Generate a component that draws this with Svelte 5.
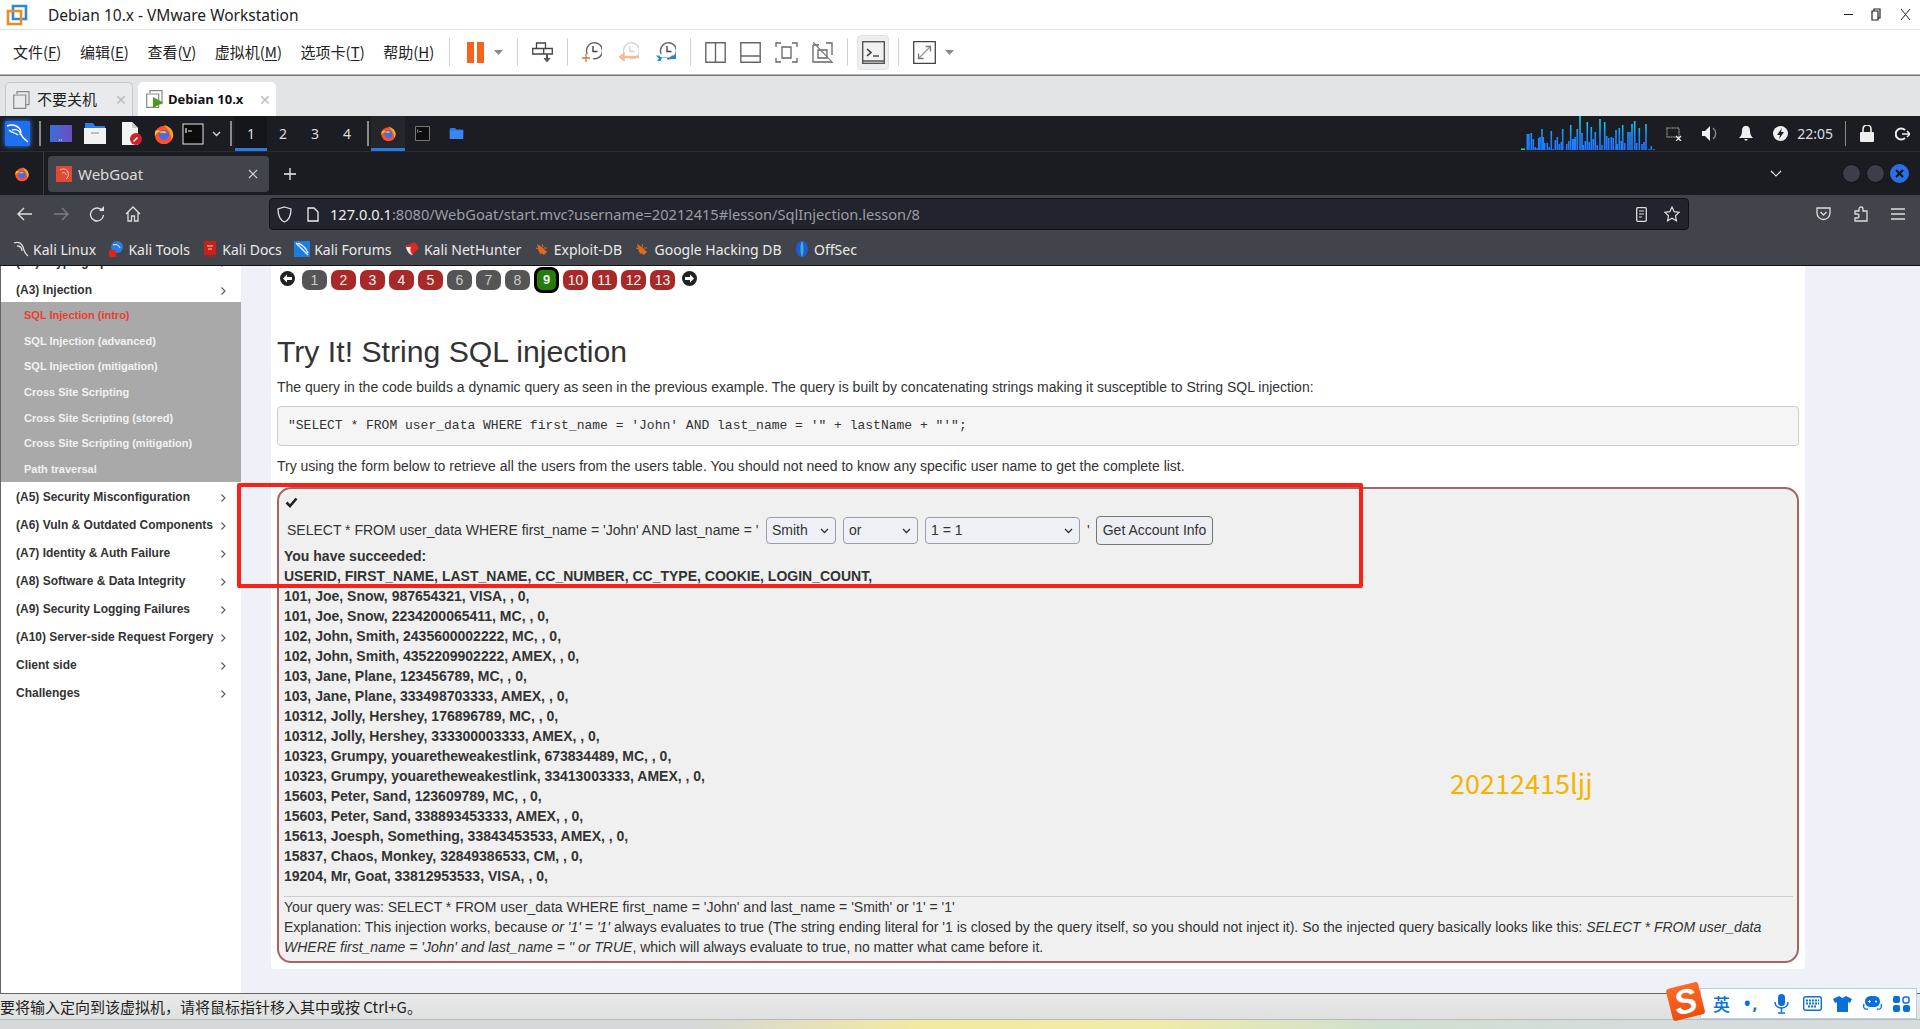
<script>
  const menus = [['文件(','F',')'],['编辑(','E',')'],['查看(','V',')'],['虚拟机(','M',')'],['选项卡(','T',')'],['帮助(','H',')']];
  const pages = [['1','g'],['2','r'],['3','r'],['4','r'],['5','r'],['6','g'],['7','g'],['8','g'],['9','c'],['10','r'],['11','r'],['12','r'],['13','r']];
  const subs = ['SQL Injection (advanced)','SQL Injection (mitigation)','Cross Site Scripting','Cross Site Scripting (stored)','Cross Site Scripting (mitigation)','Path traversal'];
  const cats = ['(A5) Security Misconfiguration','(A6) Vuln & Outdated Components','(A7) Identity & Auth Failure','(A8) Software & Data Integrity','(A9) Security Logging Failures','(A10) Server-side Request Forgery','Client side','Challenges'];
  const rows = ['101, Joe, Snow, 987654321, VISA, , 0,','101, Joe, Snow, 2234200065411, MC, , 0,','102, John, Smith, 2435600002222, MC, , 0,','102, John, Smith, 4352209902222, AMEX, , 0,','103, Jane, Plane, 123456789, MC, , 0,','103, Jane, Plane, 333498703333, AMEX, , 0,','10312, Jolly, Hershey, 176896789, MC, , 0,','10312, Jolly, Hershey, 333300003333, AMEX, , 0,','10323, Grumpy, youaretheweakestlink, 673834489, MC, , 0,','10323, Grumpy, youaretheweakestlink, 33413003333, AMEX, , 0,','15603, Peter, Sand, 123609789, MC, , 0,','15603, Peter, Sand, 338893453333, AMEX, , 0,','15613, Joesph, Something, 33843453533, AMEX, , 0,','15837, Chaos, Monkey, 32849386533, CM, , 0,','19204, Mr, Goat, 33812953533, VISA, , 0,'];
  const marks = [['Kali Linux','dragon'],['Kali Tools','tools'],['Kali Docs','docs'],['Kali Forums','forums'],['Kali NetHunter','hunter'],['Exploit-DB','bug'],['Google Hacking DB','bug'],['OffSec','off']];
  // Network graph samples: [column, height]
  const samples = [[13.3,16],[15,16],[17.3,17],[19.3,11],[21.3,3],[23.3,2],[24.7,12],[26,13],[28,21],[29.3,13],[30.7,7],[33.3,7],[35.3,3],[37.3,19],[39.3,1],[41.3,10],[43.3,13],[45.3,6],[47.3,8],[48.7,21],[52.7,6],[54.7,9],[56.7,25],[58.7,11],[60,11],[61.3,13],[63.3,21],[66,34],[68,17],[69.3,5],[71.3,9],[73.3,28],[75.3,8],[77.3,23],[79.3,11],[81.3,18],[83.3,5],[86,31],[88,5],[90.7,28],[92.7,14],[94.7,12],[97.3,13],[99.3,12],[102,20],[103.3,6],[105.3,22],[107.3,9],[108.7,25],[110.7,7],[114,18],[116,18],[118,26],[120.7,29],[122.7,7],[125.3,22],[128,6],[130,8],[132,26],[135.3,1],[137.3,4],[140,1]];
  const barPath = samples.map(([x,h])=>`M${x} 34V${34-h}`).join('');
</script>

{#snippet fox(s)}
  <svg width={s} height={s} viewBox="0 0 24 24" class="noshrink">
    <circle cx="12" cy="13" r="10" fill="#ff4f2f"/>
    <path d="M12 2c5 2 10 5 10 11 0 2-1 4-2 5 0-6-3-10-8-16z" fill="#ffa31a"/>
    <path d="M3 8c-1 2-1 4-1 6 2-3 4-5 7-5-2-1-4-1-6-1z" fill="#ffbf2e"/>
    <circle cx="12" cy="13" r="5.5" fill="#3f6fe0"/>
    <path d="M7 10c3-2 6-1 8 0-2 1-3 2-4 1-2 0-3 0-4-1z" fill="#ffb52b"/>
  </svg>
{/snippet}
{#snippet term(s, line)}
  <svg width={s} height={s} viewBox="0 0 22 22" class="noshrink">
    <rect x="1" y="1" width="20" height="20" fill="#0c0c0e" stroke={line} stroke-width="1"/>
    <path d="M4 5v5M6 8h4" stroke={line} stroke-width="1.2" fill="none"/>
  </svg>
{/snippet}
{#snippet folder(w, h)}
  <svg width={w} height={h} viewBox="0 0 22 18" class="noshrink">
    <path d="M1 3a2 2 0 0 1 2-2h6l2 2h8a2 2 0 0 1 2 2v2H1z" fill="#2a78e8"/>
    <path d="M1 5h20v11a1 1 0 0 1-1 1H2a1 1 0 0 1-1-1z" fill="#3b87f2"/>
  </svg>
{/snippet}
{#snippet chev()}
  <svg width="7" height="10" viewBox="0 0 7 10" class="chev"><path d="M1.5 1.5 5 5 1.5 8.5" fill="none" stroke="#555" stroke-width="1.1"/></svg>
{/snippet}
{#snippet caret()}
  <svg width="9" height="5" viewBox="0 0 9 5" class="noshrink"><path d="M0 0h9L4.5 5z" fill="#8a8a8a"/></svg>
{/snippet}
{#snippet clock(kind)}
  <svg width="20" height="20" viewBox="0 0 20 20" class="noshrink">
    <path d="M4.200 13A8 8 0 1 1 10 17.600" fill="none" stroke={kind===2?'#d4d4d4':'#666'} stroke-width="1.400" transform="translate(1 -1)"/>
    <path d="M11 4v5.500h4.500" fill="none" stroke={kind===2?'#d4d4d4':'#444'} stroke-width="1.400"/>
    {#if kind===1}<path d="M4 12v8M0 16h8" stroke="#e86a3a" stroke-width="1.300"/>{/if}
    {#if kind===2}<path d="M4 15h16M4.500 12.500 1 15l3.500 2.500z" stroke="#f9b896" fill="#f9b896" stroke-width="2.400"/>{/if}
    {#if kind===3}<path d="M0 13.500h3l1.500 1.500H14l2-1.500h4V17h-4l-2-1.500H6L4.500 19H1l2-2.500z" fill="#1888de"/>{/if}
  </svg>
{/snippet}
{#snippet selchev()}
  <svg width="9" height="6" viewBox="0 0 9 6" class="selchev"><path d="M1 1l3.500 3.500L8 1" fill="none" stroke="#333" stroke-width="1.300"/></svg>
{/snippet}

<div class="screen">
  <header class="title">
    <svg width="22" height="22" viewBox="0 0 22 22" class="vmlogo">
      <path d="M7 2h13v13H7z" fill="none" stroke="#2a8bd0" stroke-width="2.600"/>
      <path d="M2 7h13v13H2z" fill="none" stroke="#f08a1d" stroke-width="2.600"/>
    </svg>
    <span class="title-text">Debian 10.x - VMware Workstation</span>
    <div class="winctl">
      <span class="min"></span>
      <svg width="11" height="13" viewBox="0 0 11 13"><path d="M3 3V1h6v9H7M1 3h6v9H1z" fill="none" stroke="#222" stroke-width="1.2"/></svg>
      <svg width="11" height="13" viewBox="0 0 11 13"><path d="M1 1l9 11M10 1 1 12" stroke="#222" stroke-width="1"/></svg>
    </div>
  </header>

  <nav class="menubar">
    <div class="menus">
      {#each menus as m}<span>{m[0]}<u>{m[1]}</u>{m[2]}</span>{/each}
    </div>
    <i class="sep first"></i>
    <svg width="17" height="21" viewBox="0 0 17 21" class="noshrink"><path d="M0 0h7v21H0zM10 0h7v21h-7z" fill="#f4641e"/></svg>
    <span class="caretbox">{@render caret()}</span>
    <i class="sep"></i>
    <svg width="21" height="21" viewBox="0 0 21 21" class="noshrink"><path d="M4.500 1h9v5.500h-9zM.7 6.500h11v5.500H.7zM11.700 6.500h8.600v5.500h-8.600z" fill="none" stroke="#444" stroke-width="1.300"/><path d="M15 12v4" stroke="#555" stroke-width="2"/><path d="M11.500 16h7L15 20.500z" fill="#555"/></svg>
    <i class="sep"></i>
    <div class="clocks">
      {@render clock(1)}
      {@render clock(2)}
      {@render clock(3)}
    </div>
    <i class="sep"></i>
    <div class="panels">
      <svg width="21" height="21" viewBox="0 0 21 21"><path d="M.8.8h19.400v19.400H.8zM10.500 1v19" fill="none" stroke="#666" stroke-width="1.400"/></svg>
      <svg width="21" height="21" viewBox="0 0 21 21"><path d="M.8.8h19.400v19.400H.8zM1 14h19" fill="none" stroke="#666" stroke-width="1.400"/></svg>
      <svg width="23" height="21" viewBox="0 0 23 21"><path d="M1 5V1h5M17 1h5v4M22 16v4h-5M6 20H1v-4M7 5h9v11H7z" fill="none" stroke="#666" stroke-width="1.300"/></svg>
      <svg width="21" height="21" viewBox="0 0 21 21"><path d="M1 3h6M14 1h6v12M20 20H1V3M6 8h9v8H6z" fill="none" stroke="#666" stroke-width="1.300"/><path d="M1 0l20 21" stroke="#777" stroke-width="1.200"/></svg>
    </div>
    <i class="sep tight-r"></i>
    <div class="active">
      <svg width="23" height="23" viewBox="0 0 23 23"><rect x=".7" y=".7" width="21.600" height="21.600" fill="#f1f1f1" stroke="#555" stroke-width="1.400"/><path d="M5 8l4 3.500L5 15" fill="none" stroke="#333" stroke-width="1.500"/><path d="M11 15h6" stroke="#333" stroke-width="1.300"/><path d="M1 20h21" stroke="#555" stroke-width="1.500"/></svg>
    </div>
    <i class="sep tight-l"></i>
    <svg width="23" height="23" viewBox="0 0 23 23" class="noshrink"><path d="M.7.7h21.600v21.600H.7z" fill="none" stroke="#444" stroke-width="1.300"/><path d="M6 17 17 6" stroke="#999" stroke-width="1.200"/><path d="M12.500 5.500h5v5M5.500 12.500v5h5" fill="none" stroke="#777" stroke-width="1.300"/></svg>
    <span class="caret2">{@render caret()}</span>
  </nav>

  <div class="vmtabs">
    <div class="vtab off">
      <svg width="17" height="18" viewBox="0 0 17 18"><path d="M4 3V.7h12v13h-3M.7 4h12v13.300H.7z" fill="none" stroke="#888" stroke-width="1.200"/></svg>
      <span class="vt-name">不要关机</span>
      <span class="vt-x">✕</span>
    </div>
    <div class="vtab on">
      <svg width="17" height="18" viewBox="0 0 17 18"><path d="M4 3V.7h12v13h-3M.7 4h12v13.300H.7z" fill="none" stroke="#888" stroke-width="1.200"/><path d="M7 7l10 5.500L7 18z" fill="#4b9a1e"/></svg>
      <b class="vt-bold">Debian 10.x</b>
      <span class="vt-x">✕</span>
    </div>
  </div>

  <div class="panel">
    <div class="kali">
      <svg width="25" height="25" viewBox="0 0 25 25"><rect width="25" height="25" rx="1" fill="#1e70f0"/><path d="M2 5c5-2 9-1 12 2 2 2 2 5 1 7M7 9c4-1 7 0 9 4 1 3 3 5 7 8M4 9c2 3 6 2 9 5" fill="none" stroke="#fff" stroke-width="1.400"/></svg>
    </div>
    <i class="pbar"></i>
    <svg class="launch-a" width="22" height="17" viewBox="0 0 22 17"><defs><linearGradient id="dg" x1="0" x2="1"><stop offset="0" stop-color="#3b6fd8"/><stop offset="1" stop-color="#6a4fc0"/></linearGradient></defs><rect width="22" height="17" fill="url(#dg)"/><path d="M9 15h4" stroke="#fff" stroke-dasharray="1 1"/></svg>
    <svg class="launch-b" width="22" height="21" viewBox="0 0 22 21"><path d="M1 0h8l2 3h10v4H1z" fill="#2b7de9"/><rect x="0" y="5" width="22" height="16" fill="#f2f2f2"/><path d="M7 10h8" stroke="#aaa" stroke-width="1.400"/></svg>
    <svg class="launch-c" width="21" height="23" viewBox="0 0 21 23"><path d="M1 0h10l6 6v17H1z" fill="#f4f4f4"/><path d="M11 0v6h6" fill="#ccc"/><circle cx="15" cy="17" r="6" fill="#d3202a"/><path d="M12.500 19.500l4-4" stroke="#fff" stroke-width="1.600"/></svg>
    <span class="launch-d">{@render fox(22)}</span>
    <span class="launch-e">{@render term(22,'#e8e8e8')}</span>
    <svg class="launch-f" width="9" height="6" viewBox="0 0 9 6"><path d="M1 1l3.500 3.500L8 1" fill="none" stroke="#ddd" stroke-width="1.300"/></svg>
    <i class="pbar bar2"></i>
    <div class="works">
      <span class="cur">1</span><span>2</span><span>3</span><span>4</span>
    </div>
    <i class="pbar bar3"></i>
    <span class="task cur">{@render fox(17)}</span>
    <span class="task">{@render term(15,'#aaa')}</span>
    <span class="task">{@render folder(15,13)}</span>
    <div class="grow"></div>
    <svg class="graph" width="150" height="34" viewBox="0 0 150 34">
      <defs><linearGradient id="gg" gradientUnits="userSpaceOnUse" x1="0" y1="34" x2="0" y2="0"><stop offset="0" stop-color="#1f78ff"/><stop offset=".4" stop-color="#1f86ff"/><stop offset=".75" stop-color="#0fc4ea"/><stop offset="1" stop-color="#00e8e0"/></linearGradient></defs>
      <rect x="7" y="32.500" width="4" height="1.500" fill="#19d9b0"/>
      <path d={barPath} stroke="url(#gg)" stroke-width="1.600" fill="none"/>
    </svg>
    <svg class="tray net" width="16" height="14" viewBox="0 0 16 14"><path d="M1 1h12v9H1z" fill="none" stroke="#777" stroke-width="1.500" stroke-dasharray="2 .5"/><path d="M10 9l5 5M15 9l-5 5" stroke="#eee" stroke-width="1.300"/></svg>
    <svg class="tray" width="17" height="15" viewBox="0 0 17 15"><path d="M0 5h3l5-5v15l-5-5H0z" fill="#f0f0f0"/><path d="M11 2a7 7 0 0 1 0 11" fill="none" stroke="#888" stroke-width="1.500"/></svg>
    <svg class="tray" width="14" height="15" viewBox="0 0 14 15"><path d="M7 0c3 0 4 2 4 5 0 3 1 5 3 7H0c2-2 3-4 3-7 0-3 1-5 4-5zM5 13h4l-2 2z" fill="#f0f0f0"/></svg>
    <svg class="tray" width="15" height="15" viewBox="0 0 15 15"><circle cx="7.500" cy="7.500" r="7.500" fill="#f0f0f0"/><path d="M9 2 4 9h3l-1 4 5-7H8z" fill="#1c1e23"/></svg>
    <span class="clock-text">22:05</span>
    <i class="pbar bar4"></i>
    <svg class="lock" width="14" height="17" viewBox="0 0 14 17"><path d="M3 7V4a4 4 0 0 1 8 0v3" fill="none" stroke="#eee" stroke-width="1.600"/><rect y="7" width="14" height="10" rx="1" fill="#eee"/></svg>
    <svg class="power" width="15" height="14" viewBox="0 0 15 14"><path d="M10 3a5.500 5.500 0 1 0 0 8" fill="none" stroke="#eee" stroke-width="2"/><path d="M7 7h8M12 4l3 3-3 3" fill="none" stroke="#eee" stroke-width="1.500"/></svg>
  </div>

  <div class="fftabs">
    <div class="ffbtn">{@render fox(16)}</div>
    <div class="fftab">
      <svg width="16" height="16" viewBox="0 0 16 16" class="noshrink"><rect width="16" height="16" rx="1" fill="#e04a35"/><path d="M4 4c3-2 7-1 8 2s0 6-2 7M6 7c2-1 4 0 4 2" fill="none" stroke="#f7c9bd" stroke-width="1"/></svg>
      <span class="fft-name">WebGoat</span>
      <svg width="10" height="10" viewBox="0 0 10 10" class="fft-x"><path d="M1 1l8 8M9 1 1 9" stroke="#d8d8d8" stroke-width="1.100"/></svg>
    </div>
    <svg width="12" height="12" viewBox="0 0 12 12" class="plus"><path d="M6 0v12M0 6h12" stroke="#eee" stroke-width="1.300"/></svg>
    <div class="grow"></div>
    <svg width="12" height="7" viewBox="0 0 12 7" class="ffchev"><path d="M1 1l5 5 5-5" fill="none" stroke="#e8e8e8" stroke-width="1.200"/></svg>
    <i class="dot"></i><i class="dot"></i>
    <span class="dot close"><svg width="9" height="9" viewBox="0 0 9 9"><path d="M1 1l7 7M8 1 1 8" stroke="#111" stroke-width="2"/></svg></span>
  </div>

  <div class="navbar">
    <svg class="nb back" width="16" height="14" viewBox="0 0 16 14"><path d="M15 7H1M7 1 1 7l6 6" fill="none" stroke="#ddd" stroke-width="1.400"/></svg>
    <svg class="nb fwd" width="16" height="14" viewBox="0 0 16 14"><path d="M1 7h14M9 1l6 6-6 6" fill="none" stroke="#7d7f86" stroke-width="1.400"/></svg>
    <svg class="nb rel" width="16" height="16" viewBox="0 0 16 16"><path d="M13.500 5A6.500 6.500 0 1 0 14.500 9" fill="none" stroke="#ddd" stroke-width="1.400"/><path d="M10 5h5V0z" fill="#ddd"/></svg>
    <svg class="nb home" width="16" height="16" viewBox="0 0 16 16"><path d="M1 8l7-7 7 7M3 6v9h3.500v-5h3v5H13V6" fill="none" stroke="#ddd" stroke-width="1.300"/></svg>
    <div class="urlbar">
      <svg class="shield" width="15" height="17" viewBox="0 0 15 17"><path d="M7.500 1 14 3c0 7-2 11-6.500 13C3 14 1 10 1 3z" fill="none" stroke="#ddd" stroke-width="1.300"/></svg>
      <svg class="file" width="12" height="15" viewBox="0 0 12 15"><path d="M1 1h6l4 4v9H1z" fill="none" stroke="#eee" stroke-width="1.300"/></svg>
      <span class="url"><b>127.0.0.1</b>:8080/WebGoat/start.mvc?username=20212415#lesson/SqlInjection.lesson/8</span>
      <div class="grow"></div>
      <svg class="reader" width="11" height="15" viewBox="0 0 11 15"><rect x=".7" y=".7" width="9.600" height="13.600" rx="1" fill="none" stroke="#ddd" stroke-width="1.300"/><path d="M3 4h5M3 7h5M3 10h3" stroke="#ddd"/></svg>
      <svg class="star" width="16" height="16" viewBox="0 0 16 16"><path d="M8 1l2.200 4.700 5 .6-3.700 3.500 1 5L8 12.300 3.500 14.800l1-5L.8 6.300l5-.6z" fill="none" stroke="#ddd" stroke-width="1.200"/></svg>
    </div>
    <svg class="pocket" width="15" height="14" viewBox="0 0 15 14"><path d="M1 1h13v5a6.500 6.500 0 0 1-13 0z" fill="none" stroke="#ddd" stroke-width="1.300"/><path d="M4.500 5l3 3 3-3" fill="none" stroke="#ddd" stroke-width="1.300"/></svg>
    <svg class="puzzle" width="15" height="16" viewBox="0 0 15 16"><path d="M1 5h4V3a2 2 0 0 1 4 0v2h4v10H1v-3h2a2 2 0 0 0 0-4H1z" fill="none" stroke="#ddd" stroke-width="1.300"/></svg>
    <svg class="burger" width="14" height="12" viewBox="0 0 14 12"><path d="M0 1h14M0 6h14M0 11h14" stroke="#ddd" stroke-width="1.300"/></svg>
  </div>

  <div class="marks">
    {#each marks as [label, kind]}
      <span class="mark">
        <svg width="16" height="16" viewBox="0 0 16 16" class="noshrink">
          {#if kind==='dragon'}<path d="M1 2c5-2 8 1 9 4s1 6 5 9M4 5c3 0 5 2 5 5" fill="none" stroke="#ddd" stroke-width="1.300"/>
          {:else if kind==='tools'}<circle cx="9" cy="6" r="6" fill="#2c7be5"/><rect x="1" y="9" width="7" height="7" rx="1" fill="#d8261d"/><path d="M5 4c3-1 6 0 7 3" stroke="#fff" fill="none"/>
          {:else if kind==='docs'}<rect x="2" width="12" height="16" fill="#c9201a"/><path d="M5 5h6M6 8h4" stroke="#f4d0c8"/><path d="M2 15h12" stroke="#344"/>
          {:else if kind==='forums'}<rect width="16" height="16" fill="#1e7be0"/><path d="M2 2l12 12M4 2c5 2 8 5 10 10" stroke="#fff" stroke-width="1.300" fill="none"/>
          {:else if kind==='hunter'}<path d="M1 5l10-4 4 6-8 8z" fill="#d92a24"/><path d="M2 6c1 5 4 8 7 8-3-3-3-6-2-8z" fill="#eee"/>
          {:else if kind==='bug'}<path d="M3 3l5 3 5 5-3 3-5-3z" fill="#e06a1c"/><path d="M2 7l3 1M6 13l1-3M8 3l1 3M13 7l-3 0" stroke="#e06a1c"/>
          {:else}<ellipse cx="8" cy="8" rx="6" ry="8" fill="#2458d8"/><path d="M8 0c-2 3-2 13 0 16 2-3 2-13 0-16z" fill="#35b5c8"/>{/if}
        </svg>
        <span>{label}</span>
      </span>
    {/each}
  </div>

  <div class="page">
    <aside class="side">
      <div class="cat clipped"><span>(A2) Cryptographic Failures</span>{@render chev()}</div>
      <div class="cat open"><span>(A3) Injection</span>{@render chev()}</div>
      <div class="subs">
        <div class="sub red">SQL Injection (intro)</div>
        {#each subs as s}<div class="sub">{s}</div>{/each}
      </div>
      <div class="cats">
        {#each cats as c}<div class="cat"><span>{c}</span>{@render chev()}</div>{/each}
      </div>
    </aside>
    <main class="main">
      <section class="card">
        <div class="pager">
          <svg width="15" height="15" viewBox="0 0 15 15" class="arrow"><circle cx="7.500" cy="7.500" r="7.500" fill="#222"/><path d="M3 7.500l4-4v2.500h5v3H7v2.500z" fill="#fff"/></svg>
          <div class="badges">
            {#each pages as [n, k]}<span class="badge {k}">{n}</span>{/each}
          </div>
          <svg width="15" height="15" viewBox="0 0 15 15" class="arrow after"><circle cx="7.500" cy="7.500" r="7.500" fill="#222"/><path d="M12 7.500l-4-4v2.500H3v3h5v2.500z" fill="#fff"/></svg>
        </div>
        <h2>Try It! String SQL injection</h2>
        <p class="lead">The query in the code builds a dynamic query as seen in the previous example. The query is built by concatenating strings making it susceptible to String SQL injection:</p>
        <pre class="code">"SELECT * FROM user_data WHERE first_name = 'John' AND last_name = '" + lastName + "'";</pre>
        <p class="lead second">Try using the form below to retrieve all the users from the users table. You should not need to know any specific user name to get the complete list.</p>
        <div class="attack">
          <svg width="13" height="11" viewBox="0 0 13 11" class="tick"><path d="M1.500 5.500 5 9l6.500-7.500" fill="none" stroke="#222" stroke-width="2.600"/></svg>
          <form class="query">
            <span class="qtext">SELECT * FROM user_data WHERE first_name = 'John' AND last_name = '</span>
            <span class="sel s1"><select><option>Smith</option></select>{@render selchev()}</span>
            <span class="sel s2"><select><option>or</option></select>{@render selchev()}</span>
            <span class="sel s3"><select><option>1 = 1</option></select>{@render selchev()}</span>
            <span class="quote">'</span>
            <button type="button" class="go">Get Account Info</button>
          </form>
          <div class="out">
            <div>You have succeeded:</div>
            <div>USERID, FIRST_NAME, LAST_NAME, CC_NUMBER, CC_TYPE, COOKIE, LOGIN_COUNT,</div>
            {#each rows as r}<div>{r}</div>{/each}
          </div>
          <hr />
          <div class="expl">
            <div>Your query was: SELECT * FROM user_data WHERE first_name = 'John' and last_name = 'Smith' or '1' = '1'</div>
            <div>Explanation: This injection works, because <em>or '1' = '1'</em> always evaluates to true (The string ending literal for '1 is closed by the query itself, so you should not inject it). So the injected query basically looks like this: <em>SELECT * FROM user_data WHERE first_name = 'John' and last_name = '' or TRUE</em>, which will always evaluate to true, no matter what came before it.</div>
          </div>
        </div>
      </section>
    </main>
  </div>

  <footer class="status">要将输入定向到该虚拟机，请将鼠标指针移入其中或按 Ctrl+G。</footer>
  <div class="desk"></div>

  <div class="redbox"></div>
  <div class="wm">20212415ljj</div>
  <div class="ime">
    <span class="ime-zh">英</span>
    <span class="ime-p">•,</span>
    <svg class="mic" width="15" height="20" viewBox="0 0 15 20"><rect x="4" y="0" width="7" height="12" rx="3.500" fill="#0a6fd8"/><path d="M1 8c0 4 3 6 6.500 6S14 12 14 8M7.500 14v4M4 19h7" fill="none" stroke="#0a6fd8" stroke-width="1.500"/></svg>
    <svg width="19" height="15" viewBox="0 0 19 15"><rect x=".7" y=".7" width="17.600" height="13.600" rx="2" fill="none" stroke="#0a6fd8" stroke-width="1.400"/><path d="M3 4.500h13M3 7.500h13M5 10.500h9" stroke="#0a6fd8" stroke-width="1.800" stroke-dasharray="2 1"/></svg>
    <svg width="19" height="16" viewBox="0 0 19 16"><path d="M6 0l3.500 2L13 0l6 3-2 4-2-1v10H4V6L2 7 0 3z" fill="#0a6fd8"/></svg>
    <svg width="19" height="16" viewBox="0 0 19 16"><rect x="2" y="0" width="15" height="11" rx="5.500" fill="#0a6fd8"/><path d="M5 5.500h3M6.500 4v3" stroke="#fff"/><circle cx="13" cy="5.500" r="1" fill="#fff"/><path d="M1 8c-1 3 0 6 4 5M18 8c1 3 0 6-4 5" fill="none" stroke="#0a6fd8" stroke-width="1.300"/></svg>
    <svg width="17" height="16" viewBox="0 0 17 16"><rect width="7" height="7" rx="2" fill="#0a6fd8"/><rect x="10" y="1" width="6" height="6" rx="2" fill="none" stroke="#0a6fd8" stroke-width="1.500"/><rect y="9" width="7" height="7" rx="2" fill="#0a6fd8"/><rect x="10" y="9" width="7" height="7" rx="2" fill="#0a6fd8"/></svg>
  </div>
  <div class="sogou"><span>S</span></div>
</div>

<style>
  :global(body) { margin: 0; background: #fff; }
  :global(html, body) { overflow: hidden; }
  .screen { position: relative; width: 1920px; height: 1029px; overflow: hidden; display: flex; flex-direction: column; font-family: "Noto Sans", "Noto Sans CJK SC", sans-serif; color: #222; background: #fff; }
  .noshrink { flex: none; display: block; }
  .grow { flex: 1; }
  i { display: block; font-style: normal; }

  .title { height: 29px; flex: none; display: flex; align-items: center; border-bottom: 1px solid #e4e4e4; padding-left: 6px; }
  .vmlogo { flex: none; }
  .title-text { margin-left: 20px; font-size: 15.500px; color: #222; }
  .winctl { margin-left: auto; display: flex; align-items: center; gap: 18px; padding-right: 9px; }
  .min { width: 9px; height: 1.500px; background: #222; }

  .menubar { height: 45px; flex: none; box-sizing: border-box; display: flex; align-items: center; padding-left: 13px; border-bottom: 1px solid #b4b4b4; }
  .menus { display: flex; gap: 18.500px; font-size: 15px; font-family: "Noto Sans CJK SC", sans-serif; width: 422px; flex: none; color: #222; padding-bottom: 2px; white-space: nowrap; }
  .menus u { text-underline-offset: 2px; }
  .sep { width: 1px; height: 28px; background: #d2d2d2; margin: 0 14px; flex: none; }
  .sep.first { margin-left: 14px; margin-right: 17px; }
  .caretbox { margin-left: 10px; flex: none; }
  .clocks { display: flex; gap: 17px; flex: none; }
  .panels { display: flex; gap: 14px; flex: none; }
  .sep.tight-r { margin-right: 9px; }
  .sep.tight-l { margin-left: 9px; }
  .active { width: 32px; height: 35px; background: #eceeef; border: 1px solid #e0e2e4; border-radius: 4px; box-sizing: border-box; display: flex; align-items: center; justify-content: center; flex: none; }
  .caret2 { margin-left: 9px; flex: none; }

  .vmtabs { height: 41px; flex: none; box-sizing: border-box; background: #e3e4e6; border-top: 1px solid #777; display: flex; align-items: flex-end; padding-left: 5px; gap: 5px; }
  .vtab { height: 34px; box-sizing: border-box; border-radius: 5px 5px 0 0; display: flex; align-items: center; padding-left: 7px; flex: none; }
  .vtab.off { width: 128px; background: #e9eaec; border: 1px solid #c8c8c8; border-bottom: none; }
  .vtab.on { width: 138px; background: #fff; padding-left: 8px; }
  .vt-name { margin-left: 7px; font-size: 15px; font-family: "Noto Sans CJK SC", sans-serif; padding-bottom: 2px; }
  .vt-bold { margin-left: 5px; font-size: 13px; font-family: "Open Sans", sans-serif; font-weight: 700; color: #111; }
  .vt-x { margin-left: auto; margin-right: 5px; font-size: 14px; color: #bbb; }

  .panel { height: 35px; flex: none; background: #1b1d22; display: flex; align-items: center; position: relative; padding-left: 5px; color: #ddd; }
  .kali { width: 25px; height: 25px; box-shadow: 0 0 5px #2a80ff; flex: none; }
  .kali svg { display: block; }
  .pbar { width: 2px; height: 25px; background: #8b8b8b; margin-left: 9px; flex: none; }
  .launch-a { margin-left: 9px; flex: none; }
  .launch-b { margin-left: 12px; flex: none; }
  .launch-c { margin-left: 15px; flex: none; }
  .launch-d { margin-left: 11px; flex: none; }
  .launch-e { margin-left: 7px; flex: none; }
  .launch-f { margin-left: 8px; flex: none; }
  .bar2 { margin-left: 9px; }
  .works { display: flex; margin-left: 3px; height: 35px; flex: none; font-size: 14px; }
  .works span { width: 32px; display: flex; align-items: center; justify-content: center; box-sizing: border-box; color: #ddd; }
  .works .cur { background: #14161b; border-bottom: 3px solid #2a7ae2; padding-top: 2px; }
  .bar3 { margin-left: 4px; }
  .task { width: 34px; height: 35px; box-sizing: border-box; display: flex; align-items: center; justify-content: center; flex: none; }
  .task.cur { background: #24262c; border-bottom: 3px solid #2a7ae2; margin-left: 2px; padding-top: 2px; }
  .graph { flex: none; margin-right: 2px; display: block; align-self: flex-end; margin-bottom: 1px; }
  .tray { margin-right: 20px; flex: none; }
  .net { margin-right: 20px; }
  .clock-text { font-size: 14px; color: #d8dde8; margin-left: -11px; margin-right: 12px; flex: none; }
  .bar4 { margin-left: 0; width: 1px; }
  .lock { margin-left: 14px; flex: none; }
  .power { margin-left: 21px; margin-right: 10px; flex: none; }

  .fftabs { height: 44px; flex: none; background: #1b1c21; border-top: 1px solid #2a2c31; box-sizing: border-box; display: flex; align-items: center; }
  .ffbtn { width: 43px; height: 43px; border-right: 1px solid #3a3c42; display: flex; align-items: center; justify-content: center; flex: none; box-sizing: content-box; }
  .fftab { width: 221px; height: 36px; margin-left: 4px; background: #42444b; border-radius: 4px; display: flex; align-items: center; padding-left: 8px; box-sizing: border-box; flex: none; }
  .fft-name { margin-left: 6px; font-size: 15px; color: #dcdcdc; }
  .fft-x { margin-left: auto; margin-right: 11px; }
  .plus { margin-left: 15px; flex: none; }
  .ffchev { margin-right: 60px; flex: none; }
  .dot { width: 17px; height: 17px; border-radius: 50%; background: #3c3f4a; border: 1px solid #111; margin-right: 5px; flex: none; display: flex; align-items: center; justify-content: center; }
  .dot.close { background: #2a6fe8; border-color: #2a6fe8; margin-right: 11px; }

  .navbar { height: 38px; flex: none; background: #42444b; display: flex; align-items: center; box-sizing: border-box; }
  .back { margin-left: 17px; }
  .fwd { margin-left: 20px; }
  .rel { margin-left: 20px; }
  .home { margin-left: 20px; }
  .nb { flex: none; }
  .urlbar { margin-left: 128px; width: 1420px; height: 32px; box-sizing: border-box; background: #22242d; border: 1px solid #111; border-radius: 4px; display: flex; align-items: center; padding-left: 7px; flex: none; }
  .shield { flex: none; }
  .file { margin-left: 15px; flex: none; }
  .url { margin-left: 11px; font-size: 14.630px; color: #9b9da3; white-space: nowrap; }
  .url b { font-weight: 400; color: #eee; }
  .reader { flex: none; margin-right: 17px; }
  .star { flex: none; margin-right: 8px; }
  .pocket { margin-left: 127px; flex: none; }
  .puzzle { margin-left: 23px; flex: none; }
  .burger { margin-left: 22px; flex: none; }

  .marks { height: 33px; flex: none; background: #42444b; display: flex; align-items: center; padding-left: 13px; gap: 12.400px; font-size: 14px; color: #eaeaea; border-bottom: 1px solid #111; box-sizing: border-box; }
  .mark { display: flex; align-items: center; gap: 4px; white-space: nowrap; }

  .page { flex: 1; min-height: 0; display: flex; overflow: hidden; background: #eff1f8; border-left: 1px solid #666; }
  .side { width: 240px; flex: none; background: #fff; font-family: "Liberation Sans", sans-serif; font-size: 12px; font-weight: 700; color: #333; }
  .cat { height: 28px; display: flex; align-items: center; padding-left: 15px; position: relative; }
  .cat.clipped { margin-top: -18px; margin-bottom: 1px; }
  .cat.open { height: 25px; }
  .chev { position: absolute; left: 219px; top: 50%; margin-top: -4px; }
  .subs { background: #a9a9a9; height: 180px; padding-top: 0; }
  .sub { height: 25.700px; display: flex; align-items: center; padding-left: 23px; font-size: 11px; color: #f2f2f2; }
  .sub.red { color: #e8402f; }
  .cats { padding-top: 1px; }

  .main { flex: 1; min-width: 0; padding-left: 30px; font-family: "Liberation Sans", sans-serif; }
  .card { width: 1534px; background: #fff; padding: 4px 6px 6px; box-sizing: border-box; border-radius: 0 0 4px 4px; color: #333; font-size: 14px; line-height: 20px; }
  .pager { display: flex; align-items: flex-start; padding-left: 3px; height: 20px; }
  .arrow { flex: none; margin-top: 1px; }
  .after { margin-left: 7px; }
  .badges { display: flex; gap: 4px; margin-left: 7px; }
  .badge { width: 25px; height: 20px; border-radius: 7px; color: #eee; display: flex; align-items: center; justify-content: center; font-size: 14px; box-sizing: border-box; }
  .badge.g { background: #555; color: #ccc; }
  .badge.r { background: #a82a28; }
  .badge.c { background: #267c0b; border: 3px solid #000; font-weight: 700; color: #eee; height: 26px; margin-top: -3px; border-radius: 8px; font-size: 13px; }
  h2 { margin: 42px 0 0; font-size: 30.200px; line-height: 40px; font-weight: 400; color: #333; }
  .lead { margin: 5px 0 0; }
  .lead.second { margin-top: 10px; }
  .code { margin: 9px 0 0; height: 40px; box-sizing: border-box; padding: 9px 10px; background: #f5f5f5; border: 1px solid #ccc; border-radius: 4px; font-family: "Liberation Mono", monospace; font-size: 13px; line-height: 20px; color: #333; }
  .attack { margin-top: 11px; height: 476px; box-sizing: border-box; background: #f0f0f0; border: 2px solid #a86464; border-radius: 14px; padding: 4px 4px 4px 5px; }
  .tick { display: block; margin: 4px 0 0 1px; }
  .query { display: flex; align-items: center; height: 28px; margin-top: 8px; padding-left: 3px; }
  .qtext { width: 479px; flex: none; white-space: nowrap; }
  .sel { position: relative; height: 27px; flex: none; display: block; }
  .sel select { appearance: none; width: 100%; height: 27px; box-sizing: border-box; border: 1px solid #9a9ea8; border-radius: 4px; background: #eef0f6; font-family: "Liberation Sans", sans-serif; font-size: 14px; color: #333; padding: 0 0 0 5px; display: block; }
  .selchev { position: absolute; right: 7px; top: 11px; pointer-events: none; }
  .s1 { width: 70px; }
  .s2 { width: 75px; margin-left: 7px; }
  .s3 { width: 155px; margin-left: 7px; }
  .quote { margin-left: 7px; width: 9px; flex: none; }
  .go { height: 29px; width: 117px; box-sizing: border-box; border: 1px solid #777; border-radius: 4px; background: #eceef3; font-family: "Liberation Sans", sans-serif; font-size: 14px; color: #333; padding: 0; flex: none; }
  .out { margin-top: 2px; font-weight: 700; }
  hr { margin: 10px 0 0; border: none; border-top: 1px solid #ccc; }
  .expl { padding-right: 20px; }

  .status { height: 27px; flex: none; box-sizing: border-box; background: linear-gradient(#e9e9e9, #dfe0e0); border-top: 1px solid #666; border-bottom: 1px solid #b8b8b8; font-family: "Noto Sans CJK SC", sans-serif; font-size: 15px; line-height: 25px; color: #222; white-space: nowrap; }
  .desk { height: 9px; flex: none; background: linear-gradient(90deg, #d4d8d8 0, #d4d8d8 36%, #f3e9a0 48%, #f0eca8 60%, #cfe0d0 72%, #d6dcdc 85%); }

  .redbox { position: absolute; left: 237px; top: 483px; width: 1126px; height: 105px; box-sizing: border-box; border: 4px solid #fb2116; border-radius: 2px; pointer-events: none; }
  .wm { position: absolute; left: 1450px; top: 762px; font-size: 27px; line-height: 42px; color: #f4b400; font-family: "Noto Sans CJK SC", sans-serif; font-weight: 400; }
  .ime { position: absolute; left: 1700px; top: 988px; width: 217px; height: 31px; box-sizing: border-box; background: #fdfeff; border: 1px solid #b9d0ea; display: flex; align-items: center; padding-left: 12px; gap: 11px; color: #0a6fd8; }
  .ime-zh { font-family: "Noto Sans CJK SC", sans-serif; font-size: 17px; font-weight: 500; width: 18px; }
  .ime-p { width: 21px; box-sizing: border-box; padding-left: 2px; font-size: 17px; font-weight: 700; letter-spacing: 2px; white-space: nowrap; }
  .mic { margin-right: 3px; }
  .sogou { position: absolute; left: 1669px; top: 985px; width: 33px; height: 33px; background: linear-gradient(#fb6a26, #ee4e10); border-radius: 3px; transform: rotate(-14deg); display: flex; align-items: center; justify-content: center; }
  .sogou span { font-family: "Liberation Sans", sans-serif; font-size: 34px; font-weight: 700; font-style: italic; color: #fff; line-height: 33px; }
</style>
